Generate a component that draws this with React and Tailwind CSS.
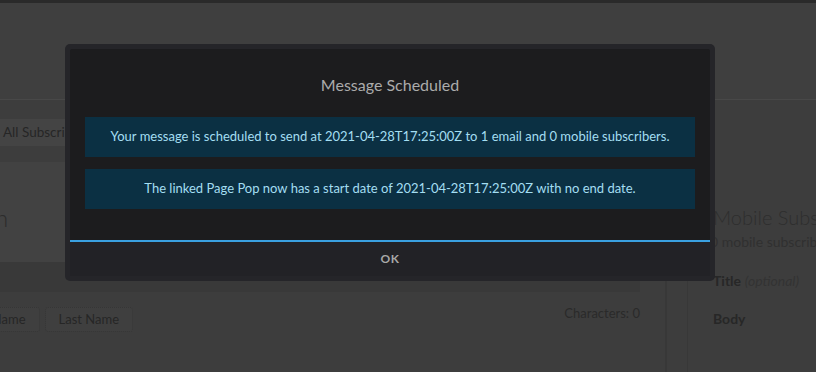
export default function App() {
  return (
    <div
      className="relative w-[816px] h-[372px] overflow-hidden bg-[#3d3d3d]"
      style={{ fontFamily: "Lato, 'Noto Sans', sans-serif" }}
    >
      {/* background page */}
      <div className="h-[3px] bg-[#2a2a2a]" />
      <div className="h-[97px] bg-[#3f3f3f] border-b border-[#484848]" />
      <div className="flex items-center h-[62px]">
        <div className="h-[27px] mt-[2px] flex items-center pl-[3px] pr-3 bg-[#444444] text-[13.5px] text-[#262626] whitespace-nowrap w-[90px] overflow-hidden">
          All Subscribers
        </div>
      </div>
      <div className="flex h-[210px]">
        <div className="w-[665px] flex flex-col">
          <div className="h-[100px] bg-[#424242] flex items-center">
            <span className="text-[24px] font-light text-[#2c2c2c] ml-[-5px] mt-[12px]">n</span>
          </div>
          <div className="h-[30px] bg-[#393939] mr-[25px]" />
          <div className="flex justify-between items-start pt-[15px] pr-[25px]">
            <div className="flex gap-[5px] ml-[-51px]">
              <div className="h-[25px] px-[13px] flex items-center border border-dotted border-[#363636] rounded-[3px] bg-[#3f3f3f] text-[13px] text-[#262626]">
                First Name
              </div>
              <div className="h-[25px] px-[13px] flex items-center border border-dotted border-[#363636] rounded-[3px] bg-[#3f3f3f] text-[13px] text-[#262626]">
                Last Name
              </div>
            </div>
            <div className="text-[13px] text-[#2a2a2a] mt-[-3px]">Characters: 0</div>
          </div>
        </div>
        <div className="w-[23px] border-l-2 border-r border-[#383838] mt-[-20px]" />
        <div className="flex-1 pl-[25px] pt-[40px] whitespace-nowrap overflow-hidden">
          <div className="text-[20px] font-light text-[#2e2e2e] leading-[30px]">Mobile Subscribers</div>
          <div className="text-[14px] text-[#303030] leading-[20px] ml-[-3px]">0 mobile subscribers</div>
          <div className="mt-[18px] text-[14px] text-[#272727]">
            <span className="font-bold">Title</span>{" "}
            <span className="italic text-[#333333]">(optional)</span>
          </div>
          <div className="mt-[17px] text-[14px] font-bold text-[#272727]">Body</div>
        </div>
      </div>

      {/* modal */}
      <div className="absolute left-[65px] top-[44px] w-[650px] h-[237px] rounded-[5px] bg-[#252529] p-[5px] flex flex-col">
        <div className="bg-[#1c1c1e] flex flex-col items-center h-[193px] border-b-2 border-[#3aa0e0] rounded-t-[2px]">
          <div className="mt-[24px] text-[16px] text-[#ababab] leading-[24px]">Message Scheduled</div>
          <div className="mt-[20px] w-[610px] flex flex-col gap-[12px]">
            <div className="h-[40px] bg-[#0b3043] flex items-center justify-center text-[13px] text-[#a4def2]">
              Your message is scheduled to send at 2021-04-28T17:25:00Z to 1 email and 0 mobile subscribers.
            </div>
            <div className="h-[40px] bg-[#0b3043] flex items-center justify-center text-[13px] text-[#a4def2]">
              The linked Page Pop now has a start date of 2021-04-28T17:25:00Z with no end date.
            </div>
          </div>
        </div>
        <div className="flex-1 bg-[#222226] flex items-center justify-center">
          <span className="text-[12px] font-bold text-[#a8a8a8] tracking-[0.5px]">OK</span>
        </div>
      </div>
    </div>
  );
}
